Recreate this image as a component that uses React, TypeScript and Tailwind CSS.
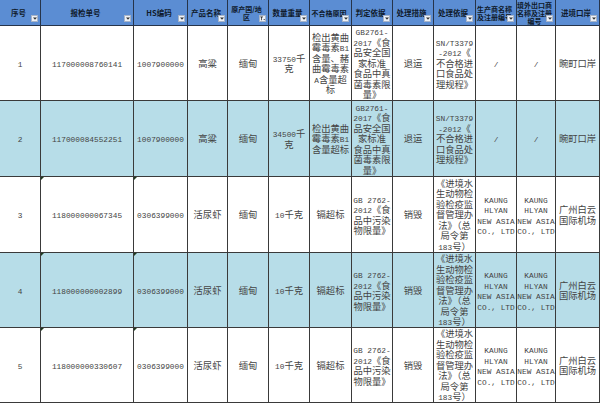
import React from "react";

type Row = { bg: string; cells: string[][] };

const headers: { lines: string[]; filter?: boolean; small?: boolean }[] = [
  { lines: ["序号"] },
  { lines: ["报检单号"] },
  { lines: ["HS编码"] },
  { lines: ["产品名称"] },
  { lines: ["原产国/地", "区"], filter: true, small: true },
  { lines: ["数量重量"] },
  { lines: ["不合格原因"], small: true },
  { lines: ["判定依据"] },
  { lines: ["处理措施"] },
  { lines: ["处理依据"] },
  { lines: ["生产商名称", "及注册编号"], small: true },
  { lines: ["境外出口商", "名称及注册", "编号"], small: true },
  { lines: ["进境口岸"] },
];

const grain = (no: string, id: string, qty: string, reason: string[]): string[][] => [
  [no],
  [id],
  ["1007900000"],
  ["高粱"],
  ["缅甸"],
  [qty, "克"],
  reason,
  ["GB2761-", "2017《食", "品安全国", "家标准", "食品中真", "菌毒素限", "量》"],
  ["退运"],
  ["SN/T3379", "-2012《", "不合格进", "口食品处", "理规程》"],
  ["/"],
  ["/"],
  ["畹町口岸"],
];

const shrimp = (no: string, id: string): string[][] => [
  [no],
  [id],
  ["0306399000"],
  ["活尿虾"],
  ["缅甸"],
  ["10千克"],
  ["镉超标"],
  ["GB 2762-", "2012《食", "品中污染", "物限量》"],
  ["销毁"],
  ["《进境水", "生动物检", "验检疫监", "督管理办", "法》（总", "局令第", "183号）"],
  ["KAUNG", "HLYAN", "NEW ASIA", "CO., LTD"],
  ["KAUNG", "HLYAN", "NEW ASIA", "CO., LTD"],
  ["广州白云", "国际机场"],
];

const rows: Row[] = [
  {
    bg: "bg-white",
    cells: grain("1", "117000008760141", "33750千", ["检出黄曲", "霉毒素B1", "含量、赭", "曲霉毒素", "A含量超", "标"]),
  },
  {
    bg: "bg-[#b7dde8]",
    cells: grain("2", "117000084552251", "34500千", ["检出黄曲", "霉毒素B1", "含量超标"]),
  },
  { bg: "bg-white", cells: shrimp("3", "118000000067345") },
  { bg: "bg-[#b7dde8]", cells: shrimp("4", "118000000002899") },
  { bg: "bg-white", cells: shrimp("5", "118000000330607") },
];

// latin runs are set narrower, like the half-width glyphs of the sheet font
function Line({ text }: { text: string }) {
  const parts = text.split(/([\x20-\x7E]+)/).filter(Boolean);
  return (
    <div className="h-[10.5px] leading-[10.5px] whitespace-pre text-center">
      {parts.map((p, i) =>
        /^[\x20-\x7E]+$/.test(p) ? (
          <span key={i} className="font-['Liberation_Mono',monospace] text-[7.8px] leading-[0]">
            {p}
          </span>
        ) : (
          <span key={i}>{p}</span>
        )
      )}
    </div>
  );
}

function DropButton({ filter }: { filter?: boolean }) {
  return (
    <div className="absolute right-[2px] bottom-[3px] w-[7px] h-[7px] bg-[#eef2f8] border border-[#a7b4c8] flex items-center justify-center">
      {filter ? (
        <svg width="5" height="5" viewBox="0 0 5 5">
          <path d="M0 0.5h3.2L2 2v2.5L1.2 4V2z" fill="#333" />
          <path d="M3.4 3h1.6L4.2 4.2z" fill="#333" />
        </svg>
      ) : (
        <svg width="4" height="3" viewBox="0 0 4 3">
          <path d="M0 0.5h4L2 2.8z" fill="#333" />
        </svg>
      )}
    </div>
  );
}

export default function App() {
  return (
    <div className="w-[600px] h-[405px] bg-white overflow-hidden font-['Noto_Sans_CJK_SC',sans-serif]">
      <div className="grid grid-cols-[41px_93px_54px_40px_41px_41px_42px_41px_41px_42px_41px_39px_44px] grid-rows-[26px_75px_76px_76px_75px_75px]">
        {headers.map((h, i) => (
          <div
            key={i}
            className={`relative bg-[#5b8dd3] border-r border-b border-[#26344a] flex flex-col items-center justify-center pr-[3px] ${
              h.small ? "text-[7px]" : "text-[7.5px]"
            } leading-[8px] font-bold text-[#0f1a2b] text-center overflow-hidden`}
          >
            {h.lines.map((l) => (
              <div key={l} className="whitespace-nowrap">
                {l}
              </div>
            ))}
            <DropButton filter={h.filter} />
          </div>
        ))}
        {rows.map((r, ri) =>
          r.cells.map((lines, ci) => (
            <div
              key={`${ri}-${ci}`}
              className={`relative ${r.bg} border-r border-b border-[#3a3a3a] flex flex-col items-stretch justify-center text-[9.3px] text-[#444] overflow-hidden`}
            >
              {lines.map((l, li) => (
                <Line key={li} text={l} />
              ))}
              {ri >= 2 && (ci === 1 || ci === 2) && (
                <div className="absolute left-0 top-0 w-0 h-0 border-t-[3px] border-r-[3px] border-t-[#1f3b1f] border-r-transparent" />
              )}
            </div>
          ))
        )}
      </div>
    </div>
  );
}
